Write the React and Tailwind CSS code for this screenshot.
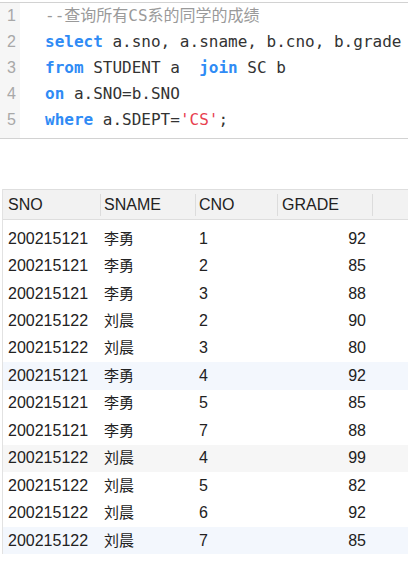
import React from "react";

const rows = [
  ["200215121", "李勇", "1", "92", ""],
  ["200215121", "李勇", "2", "85", ""],
  ["200215121", "李勇", "3", "88", ""],
  ["200215122", "刘晨", "2", "90", ""],
  ["200215122", "刘晨", "3", "80", ""],
  ["200215121", "李勇", "4", "92", "blue"],
  ["200215121", "李勇", "5", "85", ""],
  ["200215121", "李勇", "7", "88", ""],
  ["200215122", "刘晨", "4", "99", "gray"],
  ["200215122", "刘晨", "5", "82", ""],
  ["200215122", "刘晨", "6", "92", ""],
  ["200215122", "刘晨", "7", "85", "blue"],
];

const K = ({ children }) => <span className="text-[#2f8bf5] font-bold">{children}</span>;

function Editor() {
  const lines = [
    <span className="text-[#9a9a9a]">--查询所有CS系的同学的成绩</span>,
    <>
      <K>select</K> a.sno, a.sname, b.cno, b.grade
    </>,
    <>
      <K>from</K> STUDENT a  <K>join</K> SC b
    </>,
    <>
      <K>on</K> a.SNO=b.SNO
    </>,
    <>
      <K>where</K> a.SDEPT=<span className="text-[#e8404f]">'CS'</span>;
    </>,
  ];
  return (
    <div className="mt-[2px] flex border-y border-[#d2d2d2]">
      <div className="w-[20px] shrink-0 bg-[#f6f6f6] pl-[7px] pb-[5px] text-[16px] leading-[26px] text-[#a8a8a8]" style={{ fontFamily: '"Liberation Sans", sans-serif' }}>
        {lines.map((_, i) => (
          <div key={i}>{i + 1}</div>
        ))}
      </div>
      <div
        className="pl-[25px] pb-[5px] text-[16px] leading-[26px] text-[#333] whitespace-pre"
        style={{ fontFamily: '"DejaVu Sans Mono", "Noto Sans CJK SC", monospace' }}
      >
        {lines.map((l, i) => (
          <div key={i}>{l}</div>
        ))}
      </div>
    </div>
  );
}

const cols = "grid grid-cols-[97px_95px_82px_95px_1fr]";

function Divider() {
  return <span className="h-[22px] w-px shrink-0 bg-[#dcdcdc]" />;
}

export default function App() {
  return (
    <div className="w-[408px] h-[564px] overflow-hidden bg-white" style={{ fontFamily: '"Liberation Sans", "Noto Sans CJK SC", sans-serif' }}>
      <Editor />
      <div className="mt-[50px] ml-[2px] border-l border-[#e2e2e2] text-[16px] leading-5 text-[#222]">
        <div className={`${cols} h-[31px] border-y border-[#dedede] bg-[#f2f2f2]`}>
          <div className="flex items-center pl-[5px]">SNO</div>
          <div className="flex items-center">
            <Divider />
            <span className="pl-[3px]">SNAME</span>
          </div>
          <div className="flex items-center">
            <Divider />
            <span className="pl-[3px]">CNO</span>
          </div>
          <div className="flex items-center">
            <Divider />
            <span className="pl-[4px]">GRADE</span>
          </div>
          <div className="flex items-center">
            <Divider />
          </div>
        </div>
        <div className="pt-[5px]">
          {rows.map((r, i) => (
            <div
              key={i}
              className={`${cols} h-[27.45px] items-center ${
                r[4] === "blue" ? "bg-[#f3f7fd]" : r[4] === "gray" ? "bg-[#f6f6f6]" : ""
              }`}
            >
              <div className="pl-[5px] h-5">{r[0]}</div>
              <div className="pl-[4px] h-5 flex items-center">
                <span className="text-[15px] leading-5 -translate-y-px" style={{ fontFamily: '"Noto Sans CJK SC", sans-serif' }}>{r[1]}</span>
              </div>
              <div className="pl-[4px] h-5">{r[2]}</div>
              <div className="pr-[6px] h-5 text-right">{r[3]}</div>
              <div />
            </div>
          ))}
        </div>
      </div>
    </div>
  );
}
